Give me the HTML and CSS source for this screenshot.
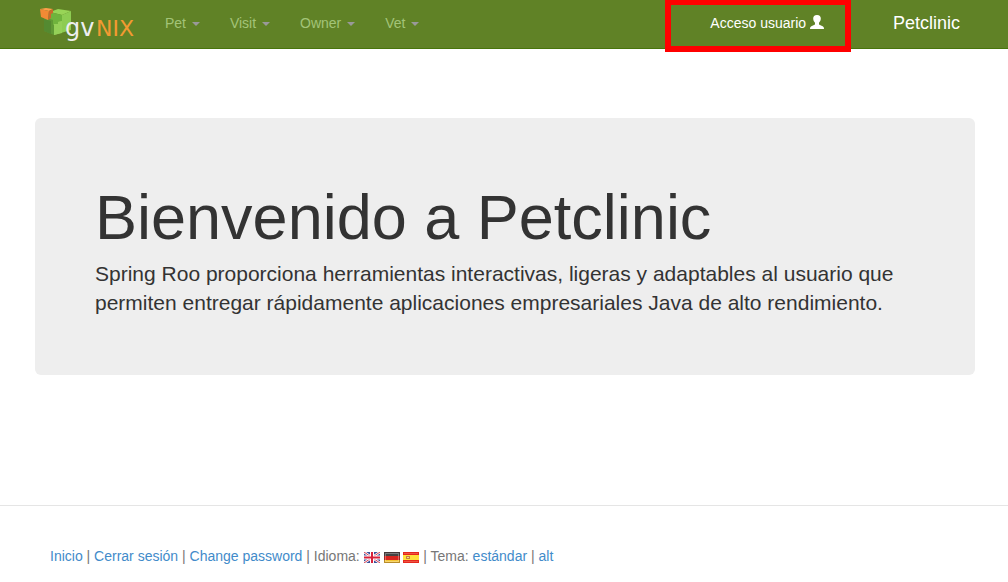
FILE: index.html
```html
<!DOCTYPE html>
<html lang="es">
<head>
<meta charset="utf-8">
<title>Petclinic</title>
<link rel="stylesheet" href="styles.css">
</head>
<body>
<header class="navbar">
  <a class="logo" href="#" aria-label="gvNIX">
    <svg width="115" height="48" viewBox="35 0 115 48" aria-hidden="true">
      <path d="M44 18L51 13L59 16L54 35L44 31Z" fill="#5f9a35"/>
      <path d="M44 19L51 21V34L44 31Z" fill="#548a31"/>
      <path d="M50 12L58 9L71 11L62 15Z" fill="#98d457"/>
      <path d="M50 12L62 15V21L58 23V25H53V20L50 19Z" fill="#6fb33d"/>
      <path d="M62 15L71 11V30L54 35V24H58V22L62 21Z" fill="#8dcc52"/>
      <path d="M54 24H58V22L62 21V33L54 35Z" fill="#94d058"/>
      <path d="M40 9L46 8L53 9L49 11Z" fill="#ffa04a"/>
      <path d="M40 9L49 11L48 20L41 17Z" fill="#f28a35"/>
      <path d="M49 11L53 9V13L51 14V18L48 20Z" fill="#c96a2b"/>
      <text class="logo-gv" x="65" y="36">gv</text>
      <text class="logo-nix" x="96" y="36">NIX</text>
    </svg>
  </a>
  <nav class="menu">
    <a href="#">Pet <span class="caret"></span></a>
    <a href="#">Visit <span class="caret"></span></a>
    <a href="#">Owner <span class="caret"></span></a>
    <a href="#">Vet <span class="caret"></span></a>
  </nav>
  <a class="login" href="#">Acceso usuario
    <svg class="user" width="14" height="14" viewBox="0 0 14 14" aria-hidden="true"><path d="M7 0C4.4 0 3.1 1.5 3.2 3.6C3.2 5.4 4 6.8 5 7.7V8.9C5 9.5 4.6 9.8 4 10.1L1.4 11.2C.4 11.7 0 12.2 0 14H14C14 12.2 13.6 11.7 12.6 11.2L10 10.1C9.4 9.8 9 9.5 9 8.9V7.7C10 6.8 10.8 5.4 10.8 3.6C10.9 1.5 9.6 0 7 0Z" fill="#fff"/></svg>
  </a>
  <a class="brand" href="#">Petclinic</a>
</header>
<main class="content">
  <section class="jumbotron">
    <h1>Bienvenido a Petclinic</h1>
    <p>Spring Roo proporciona herramientas interactivas, ligeras y adaptables al usuario que permiten entregar rápidamente aplicaciones empresariales Java de alto rendimiento.</p>
  </section>
</main>
<footer class="footer">
  <a href="#">Inicio</a> | <a href="#">Cerrar sesión</a> | <a href="#">Change password</a> | Idioma:
  <a href="#" aria-label="English"><svg class="flag" width="16" height="11" viewBox="0 0 16 11"><path fill="#39519b" d="M0 0H16V11H0Z"/><path d="M0 0L16 11M16 0L0 11" stroke="#fff" stroke-width="2.4"/><path d="M0 0L16 11M16 0L0 11" stroke="#d33c50" stroke-width="1"/><path d="M8 0V11M0 5.5H16" stroke="#fff" stroke-width="4"/><path d="M8 0V11M0 5.5H16" stroke="#d8203a" stroke-width="2"/></svg></a>
  <a href="#" aria-label="Deutsch"><svg class="flag" width="16" height="11" viewBox="0 0 16 11"><path fill="#444" d="M0 0H16V4H0Z"/><path fill="#d8251f" d="M0 4H16V8H0Z"/><path fill="#f4c431" d="M0 8H16V11H0Z"/><path d="M1.5 1.5H14.5V9.5H1.5Z" fill="none" stroke="#fff" stroke-opacity=".3"/><path d="M.5 .5H15.5V10.5H.5Z" fill="none" stroke="#422" stroke-opacity=".35"/></svg></a>
  <a href="#" aria-label="Español"><svg class="flag" width="16" height="11" viewBox="0 0 16 11"><path fill="#e5281c" d="M0 0H16V11H0Z"/><path fill="#ffe23a" d="M0 3H16V8H0Z"/><path fill="#c9803a" d="M3 4H7V7H3Z"/><path fill="#e9d8a0" d="M4 5H6V6H4Z"/><path d="M1 1.5H15M1 9.5H15" stroke="#f4705e" stroke-opacity=".6"/></svg></a>
  | Tema: <a href="#">estándar</a> | <a href="#">alt</a>
</footer>
</body>
</html>
```
FILE: styles.css
```css
* {
  box-sizing: border-box;
}

body {
  margin: 0;
  background: #fff;
  color: #333;
  font: 14px/20px "Liberation Sans", Arial, sans-serif;
}

a {
  color: #428bca;
  text-decoration: none;
}

.navbar {
  display: flex;
  align-items: flex-start;
  padding: 0 33px 0 35px;
  background: #608226;
  border-bottom: 1px solid #48750b;
}

.logo svg {
  display: block;
}

.logo text {
  font-family: "DejaVu Sans", sans-serif;
}

.logo-gv {
  fill: #eee;
  font-size: 24px;
}

.logo-nix {
  fill: #f39a32;
  font-size: 22px;
}

.menu {
  display: flex;
  flex: 1;
}

.menu a {
  padding: 13px 15px;
  color: #a3c478;
}

.caret {
  display: inline-block;
  margin-left: 2px;
  vertical-align: middle;
  border: 4px solid transparent;
  border-top-color: #999;
  border-bottom: 0;
}

.login {
  position: relative;
  margin-right: 39px;
  padding: 13px 15px;
  color: #fff;
}

.login::after {
  content: "";
  position: absolute;
  inset: -1px -12px -6px -30px;
  border: 6px solid #f00;
}

.user {
  vertical-align: -1px;
}

.brand {
  padding: 13px 15px;
  color: #fff;
  font-size: 18px;
}

.content {
  padding: 69px 33px 130px 35px;
}

.jumbotron {
  padding: 68px 60px 58px;
  background: #eee;
  border-radius: 6px;
}

.jumbotron h1 {
  margin: 0 0 10px;
  font-size: 63px;
  font-weight: 500;
  line-height: 63px;
}

.jumbotron p {
  margin: 0;
  font-size: 21px;
  line-height: 29px;
}

.footer {
  padding: 40px 50px 16px;
  border-top: 1px solid #e5e5e5;
  color: #777;
}

.flag {
  vertical-align: -2px;
}
```
